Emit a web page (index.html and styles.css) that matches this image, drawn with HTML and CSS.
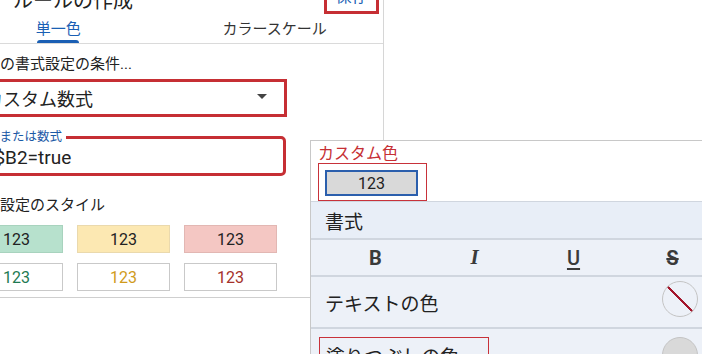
FILE: index.html
```html
<!DOCTYPE html>
<html lang="ja">
<head>
    <meta charset="UTF-8">
    <meta name="viewport" content="width=device-width, initial-scale=1.0">
    <title>条件付き書式</title>
    <link rel="stylesheet" href="styles.css">
</head>
<body>
    <div class="editor">
        <div class="rule-panel">
            <div class="panel-head">
                <h1 class="panel-title">ルールの作成</h1>
                <button class="btn-save" type="button">保存</button>
            </div>

            <div class="tabs">
                <div class="tab active">単一色</div>
                <div class="tab">カラースケール</div>
            </div>

            <div class="panel-body">
                <p class="field-label">セルの書式設定の条件...</p>
                <div class="select-box">
                    <span>カスタム数式</span>
                    <span class="caret"></span>
                </div>

                <div class="formula-box">
                    <label class="formula-label" for="formula">値または数式</label>
                    <span id="formula">=$B2=true</span>
                </div>

                <p class="field-label styles-label">書式設定のスタイル</p>
                <div class="style-grid">
                    <div class="swatch fill-green">123</div>
                    <div class="swatch fill-yellow">123</div>
                    <div class="swatch fill-red">123</div>
                    <div class="swatch text-green">123</div>
                    <div class="swatch text-yellow">123</div>
                    <div class="swatch text-red">123</div>
                </div>
            </div>
        </div>

        <!-- ポップアップ（書式の編集） -->
        <div class="format-popup">
            <div class="custom">
                <p class="custom-title">カスタム色</p>
                <div class="custom-pick">
                    <div class="picked">123</div>
                </div>
            </div>

            <div class="format-head">書式</div>

            <div class="style-tools">
                <span class="tool tool-b">B</span>
                <span class="tool tool-i">I</span>
                <span class="tool tool-u">U</span>
                <span class="tool tool-s">S</span>
            </div>

            <div class="color-row">
                <span>テキストの色</span>
                <span class="dot dot-none"></span>
            </div>

            <div class="color-row fill-row">
                <span class="mark">塗りつぶしの色</span>
                <span class="dot dot-gray"></span>
            </div>
        </div>
    </div>
</body>
</html>
```

FILE: styles.css
```css
* {
    margin: 0;
    padding: 0;
    box-sizing: border-box;
    font-family: Roboto, "Noto Sans CJK JP", sans-serif;
}
body {
    width: 702px;
    height: 354px;
    overflow: hidden;
    background: #fff;
    color: #222;
}
.editor {
    position: relative;
    height: 354px;
    overflow: hidden;
}

/* 左のパネル */
.rule-panel {
    width: 434px;
    height: 374px;
    margin-left: -50px;
    margin-top: -20px;
    border-right: 1px solid #d6d6d6;
}
.panel-head {
    display: flex;
    justify-content: space-between;
    align-items: flex-end;
    height: 34px;
    padding: 0 4px 0 63px;
}
.panel-title {
    font-size: 20px;
    font-weight: 400;
    line-height: 24px;
    margin-bottom: 1px;
}
.btn-save {
    width: 55px;
    height: 34px;
    border: 3px solid #c62f34;
    background: #fff;
    color: #1a5fb4;
    font-size: 16px;
    line-height: 16px;
    display: flex;
    align-items: flex-end;
    justify-content: center;
    padding-bottom: 6px;
}
.tabs {
    display: flex;
    border-bottom: 1px solid #dadada;
}
.tab {
    flex: 1;
    display: flex;
    flex-direction: column;
    align-items: center;
    height: 29px;
    padding-top: 5px;
    font-size: 15px;
    line-height: 20px;
    color: #333;
}
.tab.active {
    color: #1a5fb4;
}
.tab.active::after {
    content: "";
    width: 42px;
    height: 3px;
    margin-top: 1px;
    background: #1a5fb4;
    border-radius: 3px 3px 0 0;
}
.panel-body {
    padding-left: 20px;
}
.field-label {
    font-size: 15px;
    line-height: 20px;
    margin-top: 10px;
}
.select-box {
    width: 317px;
    height: 38px;
    margin-top: 5px;
    border: 3px solid #c62f34;
    display: flex;
    align-items: center;
    justify-content: space-between;
    padding: 0 17px 0 12px;
    font-size: 18px;
}
.caret {
    border-left: 5px solid transparent;
    border-right: 5px solid transparent;
    border-top: 5px solid #444;
    margin-bottom: 4px;
}
.formula-box {
    position: relative;
    width: 316px;
    height: 40px;
    margin-top: 19px;
    border: 3px solid #c62f34;
    border-radius: 5px;
    display: flex;
    align-items: center;
    padding: 2px 0 0 11px;
    font-size: 19px;
}
.formula-label {
    position: absolute;
    left: 10px;
    top: -10px;
    padding: 0 4px;
    background: #fff;
    font-size: 12.5px;
    line-height: 16px;
    color: #1c5aa6;
}
.styles-label {
    margin-top: 19px;
}
.style-grid {
    display: grid;
    grid-template-columns: repeat(3, 93px);
    gap: 10px 14px;
    margin-top: 10px;
    padding-bottom: 6px;
    border-bottom: 1px solid #cfcfcf;
}
.swatch {
    height: 28px;
    border: 1px solid #c9c9c9;
    display: flex;
    align-items: center;
    justify-content: center;
    font-size: 16px;
    background: #fff;
}
.fill-green { background: #b7e1cd; border-color: #a8d3be; }
.fill-yellow { background: #fce8b2; border-color: #ead9ad; }
.fill-red { background: #f4c7c3; border-color: #e2b7b3; }
.text-green { color: #1e7a52; }
.text-yellow { color: #d09b1c; }
.text-red { color: #a5322a; }

/* 右のポップアップ */
.format-popup {
    position: absolute;
    left: 310px;
    top: 140px;
    right: -2px;
    bottom: 0;
    background: #fff;
    border: 1px solid #c8c8c8;
    border-bottom: none;
}
.custom {
    height: 60px;
    padding: 4px 0 0 7px;
}
.custom-title {
    color: #c62f34;
    font-size: 16px;
    line-height: 18px;
}
.custom-pick {
    width: 109px;
    height: 38px;
    border: 1px solid #c8323a;
    padding: 6px 0 0 6px;
}
.picked {
    width: 93px;
    height: 26px;
    border: 2px solid #2b5fad;
    background: #d9d9d9;
    display: flex;
    align-items: center;
    justify-content: center;
    font-size: 16px;
}
.format-head {
    height: 39px;
    display: flex;
    align-items: center;
    padding-left: 14px;
    font-size: 19px;
    background: #e8eef7;
    border-top: 1px solid #d0d6df;
    border-bottom: 2px solid #d0d6df;
}
.style-tools {
    display: grid;
    grid-template-columns: repeat(4, 99px);
    align-items: center;
    height: 37px;
    padding-left: 15px;
    background: #edf1f8;
    border-bottom: 2px solid #d0d6df;
}
.tool {
    text-align: center;
    font-size: 20px;
    font-weight: 700;
    color: #3a3a3a;
}
.tool-i {
    font-family: "Liberation Serif", serif;
    font-style: italic;
    font-size: 21px;
}
.tool-u {
    font-weight: 500;
    text-decoration: underline;
    text-decoration-thickness: 2px;
    text-underline-offset: 3px;
}
.tool-s {
    text-decoration: line-through;
    text-decoration-thickness: 2px;
}
.color-row {
    height: 52px;
    display: flex;
    align-items: center;
    justify-content: space-between;
    padding: 0 5px 0 14px;
    font-size: 19px;
    background: #edf1f8;
    border-bottom: 2px solid #d0d6df;
}
.color-row .dot {
    align-self: flex-start;
    margin-top: 4px;
}
.fill-row {
    align-items: flex-start;
    padding: 8px 5px 0 8px;
    border-bottom: none;
}
.fill-row .dot {
    margin-top: 0;
}
.mark {
    width: 170px;
    height: 40px;
    border: 1px solid #c8323a;
    padding: 4px 0 0 6px;
}
.dot {
    width: 36px;
    height: 36px;
    border-radius: 50%;
    border: 1px solid #c4c4c4;
    background: #fff;
}
.dot-none {
    background: linear-gradient(to top right, transparent calc(50% - 1px), #a3162c calc(50% - 1px), #a3162c calc(50% + 1px), transparent calc(50% + 1px));
}
.dot-gray {
    background: #d9d9d9;
}
```
